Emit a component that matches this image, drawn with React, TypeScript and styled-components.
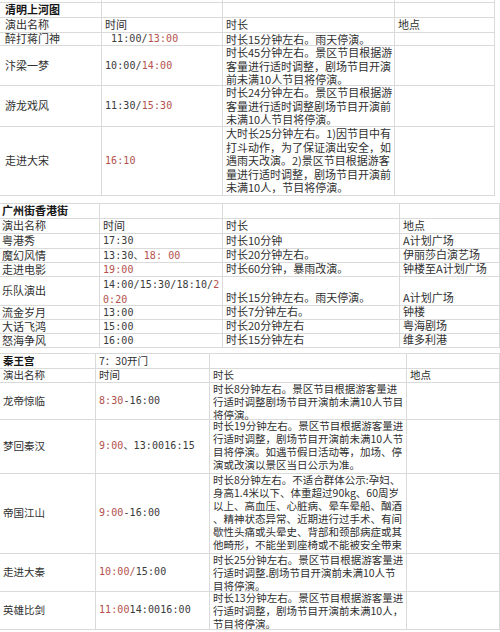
import React from 'react';
import styled, { createGlobalStyle } from 'styled-components';

const GlobalStyle = createGlobalStyle`
  html, body {
    margin: 0;
    padding: 0;
    background: #fff;
  }
  body {
    font-family: "Noto Sans CJK SC", "Noto Sans", sans-serif;
    color: #2f2f2f;
  }
`;

type Cell = React.ReactNode;

type RowData = {
  h: number;
  cells: Cell[];
  title?: boolean;
};

type TableProps = {
  cols: string;
  size: number;
  lh: number;
  pad: number;
  rows: RowData[];
  // vertical placement per column for body rows
  valign: string[];
  noTop?: boolean;
};

const Sheet = styled.div`
  width: 500px;
  height: 632px;
  overflow: hidden;
  background: #fff;
  display: flex;
  flex-direction: column;
`;

const Spacer = styled.div<{ $h: number }>`
  height: ${(p) => p.$h}px;
  flex: none;
`;

const Grid = styled.div<{ $size: number; $lh: number; $noTop?: boolean }>`
  display: flex;
  flex-direction: column;
  border-top: ${(p) => (p.$noTop ? 'none' : '1px solid #dadada')};
  font-size: ${(p) => p.$size}px;
  line-height: ${(p) => p.$lh}px;
`;

const Row = styled.div<{ $cols: string; $h: number }>`
  display: grid;
  grid-template-columns: ${(p) => p.$cols};
  height: ${(p) => p.$h}px;
  box-sizing: border-box;
  flex: none;
`;

const Box = styled.div<{ $v: string; $pad: number; $title?: boolean }>`
  display: flex;
  flex-direction: column;
  justify-content: ${(p) => p.$v};
  min-height: 0;
  padding: 0 2px 0 ${(p) => p.$pad}px;
  border-right: 1px solid #dadada;
  border-bottom: 1px solid #dadada;
  overflow-x: clip;
  overflow-y: visible;
  white-space: nowrap;
  font-weight: ${(p) => (p.$title ? 700 : 400)};
  color: ${(p) => (p.$title ? '#161616' : '#303030')};
`;

const Time = styled.span<{ $indent?: number }>`
  font-family: "DejaVu Sans Mono", "Noto Sans CJK SC", monospace;
  font-size: 10px;
  letter-spacing: 0.1px;
  color: #3a3a3a;
  margin-left: ${(p) => p.$indent || 0}px;
`;

const Red = styled.span`
  color: #b3524d;
`;

const Line = styled.div`
  white-space: nowrap;
`;

const lines = (arr: string[]) => arr.map((l, i) => <Line key={i}>{l}</Line>);

const Table = ({ cols, size, lh, pad, rows, valign, noTop }: TableProps) => (
  <Grid $size={size} $lh={lh} $noTop={noTop}>
    {rows.map((r, i) => (
      <Row key={i} $cols={cols} $h={r.h}>
        {r.cells.map((c, j) => (
          <Box
            key={j}
            $v={r.title ? 'center' : valign[j]}
            $pad={j === 0 ? pad : 3}
            $title={r.title && j === 0}
          >
            {c}
          </Box>
        ))}
      </Row>
    ))}
  </Grid>
);

const qingming: RowData[] = [
  { h: 3, cells: ['', '', '', ''] },
  { h: 15, title: true, cells: ['清明上河图', '', '', ''] },
  { h: 15, cells: ['演出名称', '时间', '时长', '地点'] },
  {
    h: 13,
    cells: [
      '醉打蒋门神',
      <Time $indent={6}>
        11:00/<Red>13:00</Red>
      </Time>,
      '时长15分钟左右。雨天停演。',
      '',
    ],
  },
  {
    h: 40,
    cells: [
      '汴梁一梦',
      <Time>
        10:00/<Red>14:00</Red>
      </Time>,
      lines(['时长45分钟左右。景区节目根据游', '客量进行适时调整，剧场节目开演', '前未满10人节目将停演。']),
      '',
    ],
  },
  {
    h: 41,
    cells: [
      '游龙戏风',
      <Time>
        11:30/<Red>15:30</Red>
      </Time>,
      lines(['时长24分钟左右。景区节目根据游', '客量进行适时调整剧场节目开演前', '未满10人节目将停演。']),
      '',
    ],
  },
  {
    h: 69,
    cells: [
      '走进大宋',
      <Time>
        <Red>16:10</Red>
      </Time>,
      lines([
        '大时长25分钟左右。1)因节目中有',
        '打斗动作，为了保证演出安全，如',
        '遇雨天改演。2)景区节目根据游客',
        '量进行适时调整，剧场节目开演前',
        '未满10人，节目将停演。',
      ]),
      '',
    ],
  },
];

const guangzhou: RowData[] = [
  { h: 15, title: true, cells: ['广州街香港街', '', '', ''] },
  { h: 15, cells: ['演出名称', '时间', '时长', '地点'] },
  { h: 15, cells: ['粤港秀', <Time>17:30</Time>, '时长10分钟', 'A计划广场'] },
  {
    h: 14,
    cells: [
      '魔幻风情',
      <Time>
        13:30、<Red>18: 00</Red>
      </Time>,
      '时长20分钟左右。',
      '伊丽莎白演艺场',
    ],
  },
  {
    h: 14,
    cells: [
      '走进电影',
      <Time>
        <Red>19:00</Red>
      </Time>,
      '时长60分钟，暴雨改演。',
      '钟楼至A计划广场',
    ],
  },
  {
    h: 29,
    cells: [
      '乐队演出',
      <>
        <Line>
          <Time>
            14:00/15:30/18:10/<Red>2</Red>
          </Time>
        </Line>
        <Line>
          <Time>
            <Red>0:20</Red>
          </Time>
        </Line>
      </>,
      '时长15分钟左右。雨天停演。',
      'A计划广场',
    ],
  },
  { h: 14, cells: ['流金岁月', <Time>13:00</Time>, '时长7分钟左右。', '钟楼'] },
  { h: 14, cells: ['大话飞鸿', <Time>15:00</Time>, '时长20分钟左右', '粤海剧场'] },
  { h: 14, cells: ['怒海争风', <Time>16:00</Time>, '时长15分钟左右', '维多利港'] },
];

const qinwang: RowData[] = [
  { h: 15, title: true, cells: ['秦王宫', '7：30开门', '', ''] },
  { h: 14, cells: ['演出名称', '时间', '时长', '地点'] },
  {
    h: 37,
    cells: [
      '龙帝惊临',
      <Time>
        <Red>8:30</Red>-16:00
      </Time>,
      lines(['时长8分钟左右。景区节目根据游客量进', '行适时调整剧场节目开演前未满10人节目', '将停演。']),
      '',
    ],
  },
  {
    h: 54,
    cells: [
      '梦回秦汉',
      <Time>
        <Red>9:00</Red>、13:0016:15
      </Time>,
      lines([
        '时长19分钟左右。景区节目根据游客量进',
        '行适时调整，剧场节目开演前未满10人节',
        '目将停演。如遇节假日活动等，加场、停',
        '演或改演以景区当日公示为准。',
      ]),
      '',
    ],
  },
  {
    h: 80,
    cells: [
      '帝国江山',
      <Time>
        <Red>9:00</Red>-16:00
      </Time>,
      lines([
        '时长8分钟左右。不适合群体公示:孕妇、',
        '身高1.4米以下、体重超过90kg、60周岁',
        '以上、高血压、心脏病、晕车晕船、酗酒',
        '、精神状态异常、近期进行过手术、有间',
        '歇性头痛或头晕史、背部和颈部病症或其',
        '他畸形，不能坐到座椅或不能被安全带束',
      ]),
      '',
    ],
  },
  {
    h: 38,
    cells: [
      '走进大秦',
      <Time>
        <Red>10:00/</Red>15:00
      </Time>,
      lines(['时长25分钟左右。景区节目根据游客量进', '行适时调整.剧场节目开演前未满10人节', '目将停演。']),
      '',
    ],
  },
  {
    h: 38,
    cells: [
      '英雄比剑',
      <Time>
        <Red>11:00</Red>14:0016:00
      </Time>,
      lines(['时长13分钟左右。景区节目根据游客量进', '行适时调整，剧场节目开演前未满10人，', '节目将停演。']),
      '',
    ],
  },
];

const App = () => (
  <>
    <GlobalStyle />
    <Sheet>
      <Table
        cols="102px 121px 172px 100px"
        size={11}
        lh={13.6}
        pad={5}
        rows={qingming}
        valign={['center', 'center', 'flex-start', 'center']}
        noTop
      />
      <Spacer $h={7} />
      <Table
        cols="100px 123px 177px 100px"
        size={11}
        lh={13.6}
        pad={2}
        rows={guangzhou}
        valign={['center', 'flex-start', 'flex-end', 'flex-end']}
      />
      <Spacer $h={5} />
      <Table
        cols="96px 114px 197px 93px"
        size={10.5}
        lh={12.9}
        pad={3}
        rows={qinwang}
        valign={['center', 'center', 'flex-start', 'center']}
      />
    </Sheet>
  </>
);

export default App;
